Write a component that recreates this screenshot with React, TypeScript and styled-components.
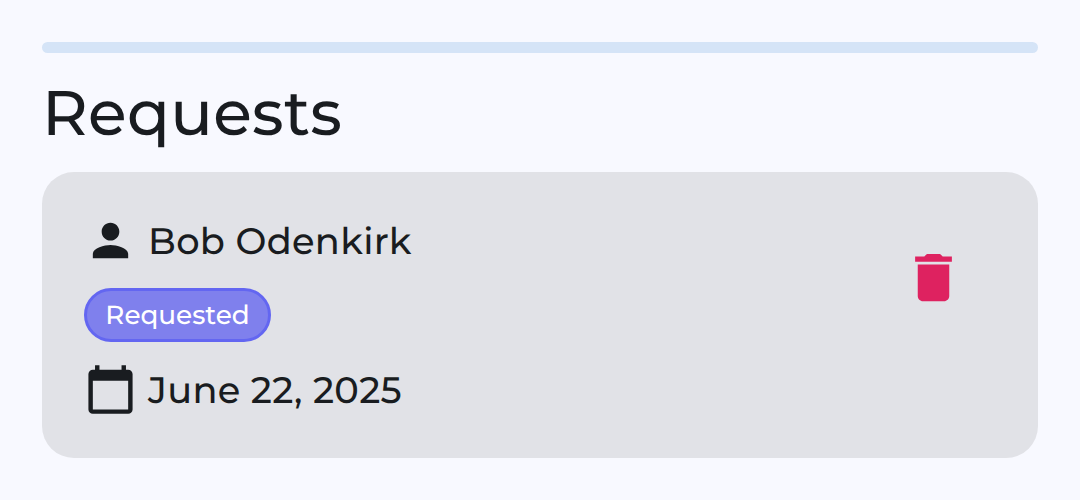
import React from "react";
import styled, { createGlobalStyle } from "styled-components";

const GlobalStyle = createGlobalStyle`
  * { box-sizing: border-box; }
  body {
    margin: 0;
    background: #f8f9ff;
    color: #191c20;
    font-family: Montserrat, Inter, "Liberation Sans", sans-serif;
    font-weight: 500;
    text-rendering: geometricPrecision;
  }
`;

const Page = styled.main`
  height: 500px;
  padding: 42px;
  overflow: hidden;
`;

const Divider = styled.div`
  height: 11px;
  border-radius: 6px;
  background: #d5e4f7;
`;

const Title = styled.h1`
  margin: 20px 0 0;
  height: 99px;
  line-height: 79px;
  font-size: 63px;
  font-weight: 500;
  letter-spacing: 0.3px;
  white-space: nowrap;
`;

const Card = styled.section`
  display: flex;
  align-items: flex-start;
  justify-content: space-between;
  height: 286px;
  padding: 42px 73px 0 42px;
  border-radius: 32px;
  background: #e1e2e7;
`;

const Details = styled.div`
  display: flex;
  flex-direction: column;
`;

const Row = styled.div`
  display: flex;
  align-items: center;
  height: 54px;
  gap: 11px;
`;

const Label = styled.span`
  padding-top: 2px;
  font-size: 36.75px;
  line-height: 50px;
  letter-spacing: 0.33px;
  white-space: nowrap;
`;

const Badge = styled.div`
  display: flex;
  align-items: center;
  justify-content: center;
  width: 187px;
  height: 54px;
  margin: 20px 0 21px;
  border: 3px solid #6366f1;
  border-radius: 27px;
  background: #7f80ed;
  color: #fff;
  font-size: 26.25px;
`;

const Icon = styled.svg`
  display: block;
  flex: none;
  fill: currentColor;
`;

const RowIcon = styled(Icon)`
  width: 53px;
  height: 53px;
  margin-bottom: 2px;
`;

const DeleteButton = styled.button`
  margin-top: 32px;
  padding: 0;
  border: 0;
  background: none;
  color: #de2260;
`;

export default function App() {
  return (
    <>
      <GlobalStyle />
      <Page>
        <Divider />
        <Title>Requests</Title>
        <Card>
          <Details>
            <Row>
              <RowIcon viewBox="0 0 24 24">
                <path d="M12 12c2.21 0 4-1.79 4-4s-1.79-4-4-4-4 1.79-4 4 1.79 4 4 4zm0 2c-2.67 0-8 1.34-8 4v2h16v-2c0-2.66-5.33-4-8-4z" />
              </RowIcon>
              <Label>Bob Odenkirk</Label>
            </Row>
            <Badge>Requested</Badge>
            <Row>
              <RowIcon viewBox="0 0 24 24">
                <path d="M20 3h-1V1h-2v2H7V1H5v2H4c-1.100 0-2 .9-2 2v16c0 1.100.9 2 2 2h16c1.100 0 2-.9 2-2V5c0-1.100-.9-2-2-2zm0 18H4V8h16v13z" />
              </RowIcon>
              <Label>June 22, 2025</Label>
            </Row>
          </Details>
          <DeleteButton aria-label="Delete request">
            <Icon width="63" height="63" viewBox="0 0 24 24">
              <path d="M6 19c0 1.100.9 2 2 2h8c1.100 0 2-.9 2-2V7H6v12zM19 4h-3.500l-1-1h-5l-1 1H5v2h14V4z" />
            </Icon>
          </DeleteButton>
        </Card>
      </Page>
    </>
  );
}
